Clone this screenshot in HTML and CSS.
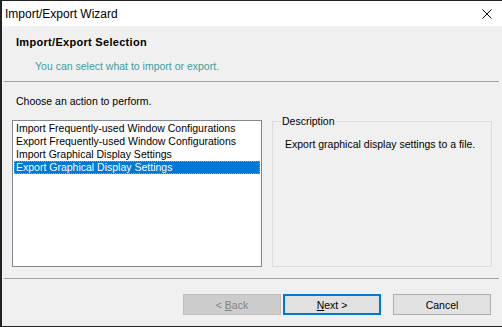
FILE: index.html
```html
<!DOCTYPE html>
<html lang="en">
<head>
    <meta charset="UTF-8">
    <title>Import/Export Wizard</title>
    <link rel="stylesheet" href="styles.css">
</head>
<body>
    <div class="window">
        <div class="titlebar">
            <span class="title">Import/Export Wizard</span>
            <svg class="close" width="10" height="10" viewBox="0 0 10 10">
                <path d="M0.5 0.5 L9.5 9.5 M9.5 0.5 L0.5 9.5" stroke="#000" stroke-width="1" fill="none"/>
            </svg>
        </div>

        <div class="header">
            <div class="header-title">Import/Export Selection</div>
            <div class="header-sub">You can select what to import or export.</div>
        </div>
        <div class="separator"></div>

        <div class="content">
            <div class="prompt">Choose an action to perform.</div>
            <div class="panes">
                <ul class="listbox">
                    <li>Import Frequently-used Window Configurations</li>
                    <li>Export Frequently-used Window Configurations</li>
                    <li>Import Graphical Display Settings</li>
                    <li class="selected">Export Graphical Display Settings</li>
                </ul>
                <fieldset class="groupbox">
                    <legend>Description</legend>
                    <p class="desc">Export graphical display settings to a file.</p>
                </fieldset>
            </div>
        </div>
        <div class="separator"></div>

        <div class="footer">
            <button class="btn" disabled>&lt; <u>B</u>ack</button>
            <button class="btn default"><u>N</u>ext &gt;</button>
            <button class="btn cancel">Cancel</button>
        </div>
    </div>
</body>
</html>
```

FILE: styles.css
```css
* {
    box-sizing: border-box;
}
body {
    margin: 0;
    font-family: "Liberation Sans", Arial, sans-serif;
    font-size: 10.5px;
    color: #000;
    background: #f0f0f0;
}

.window {
    width: 502px;
    height: 327px;
    background: #f0f0f0;
    border-top: 1px solid #222;
    border-left: 2px solid #222;
    border-bottom: 1px solid #222;
}

.titlebar {
    height: 25px;
    background: #fff;
    display: flex;
    align-items: center;
    justify-content: space-between;
    padding: 0 10px 0 3px;
}
.title {
    font-size: 12px;
    line-height: 14px;
}
.close {
    display: block;
    margin-top: 1px;
}

.header {
    height: 55px;
    padding: 10px 0 0 14px;
}
.header-title {
    font-size: 11px;
    font-weight: bold;
    letter-spacing: 0.3px;
    line-height: 13px;
}
.header-sub {
    color: #3f9d9d;
    line-height: 13px;
    margin: 11px 0 0 19px;
}

.separator {
    height: 1px;
    margin: 0 3px 0 2px;
    background: #a0a0a0;
}

.content {
    padding: 13px 0 11px 10px;
}
.prompt {
    line-height: 13px;
    margin: 0 0 12px 4px;
}
.panes {
    display: flex;
    gap: 10px;
    height: 147px;
}

.listbox {
    width: 250px;
    margin: 0;
    padding: 1px;
    list-style: none;
    background: #fff;
    border: 1px solid #828790;
}
.listbox li {
    line-height: 13px;
    padding-left: 2px;
}
.listbox .selected {
    background: #0078d7;
    color: #fff;
    outline: 1px dotted #ff8728;
    outline-offset: -1px;
}

.groupbox {
    width: 220px;
    margin: -5px 0 0 0;
    padding: 0 0 0 8px;
    border: 1px solid #dcdcdc;
    min-width: 0;
}
.groupbox legend {
    padding: 0 1px;
    line-height: 13px;
}
.desc {
    margin: 10px 0 0 4px;
    line-height: 13px;
}

.footer {
    display: flex;
    justify-content: flex-end;
    padding: 15px 11px 0 0;
}
.btn {
    width: 98px;
    height: 21px;
    padding: 0;
    font-family: "Liberation Sans", Arial, sans-serif;
    font-size: 10.5px;
    color: #000;
    background: #e1e1e1;
    border: 1px solid #adadad;
}
.btn + .btn {
    margin-left: 2px;
}
.btn:disabled {
    background: #cccccc;
    border-color: #bfbfbf;
    color: #838383;
}
.btn.default {
    border: 2px solid #0078d7;
}
.btn.cancel {
    margin-left: 12px;
}
```
